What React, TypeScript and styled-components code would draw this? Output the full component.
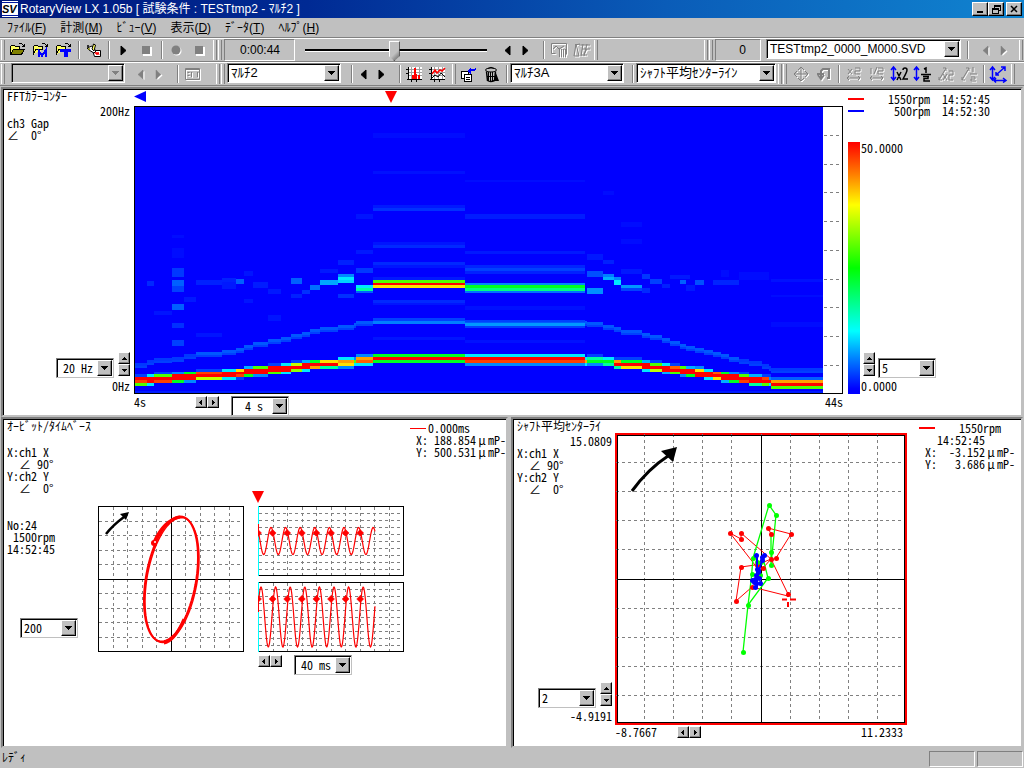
import React from "react";
import styled, { createGlobalStyle, css } from "styled-components";

const Global = createGlobalStyle`
  *, *::before, *::after { box-sizing: border-box; }
  body { margin: 0; background: #c0c0c0; }
  button, select, input { font: inherit; color: inherit; font-feature-settings: inherit; margin: 0; }
`;

const raised = css`
  border: 1px solid;
  border-color: #fff #000 #000 #fff;
  box-shadow: inset -1px -1px 0 #808080;
  background: #c0c0c0;
`;

const Window = styled.div`
  min-height: 100vh;
  display: flex;
  flex-direction: column;
  background: #c0c0c0;
  color: #000;
  font-family: "Liberation Sans", "Noto Sans CJK JP", sans-serif;
  font-size: 13px;
  line-height: 18px;
  font-feature-settings: "hwid";
`;

/* ---------- title bar and menu ---------- */

const TitleBar = styled.header`
  display: flex;
  align-items: center;
  height: 18px;
  padding: 0 2px;
  background: linear-gradient(90deg, #00187c 0%, #002a94 30%, #0a5cb8 65%, #1084d0 100%);
  color: #fff;
`;
const TitleText = styled.h1`
  flex: 1;
  margin: 0 0 0 2px;
  font-size: 12px;
  font-weight: 400;
  line-height: 18px;
  white-space: pre;
`;
const CaptionButton = styled.button<{ $apart?: boolean }>`
  ${raised}
  width: 16px;
  height: 14px;
  padding: 0;
  margin-left: ${(p) => (p.$apart ? 2 : 0)}px;
  display: grid;
  place-items: center;
`;
const MenuBar = styled.nav`
  display: flex;
  height: 20px;
  border-bottom: 1px solid #808080;
`;
const MenuItem = styled.button`
  border: 0;
  background: none;
  padding: 0 7px;
  line-height: 18px;
  font-size: 12px;
  white-space: nowrap;
`;

/* ---------- toolbars ---------- */

const ToolRow = styled.div`
  display: flex;
  height: 24px;
  border-top: 1px solid #fff;
  border-bottom: 1px solid #808080;
`;
const Grip = styled.span<{ $double?: boolean }>`
  flex: none;
  width: ${(p) => (p.$double ? 9 : 4)}px;
  margin: 1px ${(p) => (p.$double ? 2 : 1)}px;
  border-left: 1px solid #fff;
  border-right: 1px solid #808080;
  ${(p) =>
    p.$double &&
    css`
      background: linear-gradient(#808080, #808080) 2px 0 / 1px 100% no-repeat,
        linear-gradient(#fff, #fff) 4px 0 / 1px 100% no-repeat;
    `}
`;
const Divider = styled.span`
  flex: none;
  width: 2px;
  margin: 2px 2px 2px 3px;
  border-left: 1px solid #808080;
  border-right: 1px solid #fff;
`;
const ToolButton = styled.button<{ $narrow?: boolean }>`
  flex: none;
  width: ${(p) => (p.$narrow ? 18 : 23)}px;
  border: 0;
  padding: 0;
  background: none;
  display: grid;
  place-items: center;
`;
const Readout = styled.output<{ $wide?: boolean }>`
  flex: none;
  width: ${(p) => (p.$wide ? 71 : 46)}px;
  padding: 0 14px;
  line-height: 20px;
  font-size: 12px;
  text-align: right;
  border: 1px solid;
  border-color: #808080 #fff #fff #808080;
`;
const Filler = styled.span`
  flex: 1;
`;
const Slider = styled.input`
  appearance: none;
  width: 182px;
  height: 22px;
  && {
    margin: 1px 12px 0 10px;
  }
  background: linear-gradient(#000, #000) 0 9px / 100% 2px no-repeat,
    linear-gradient(#fff, #fff) 0 11px / 100% 1px no-repeat;
  &::-webkit-slider-thumb {
    appearance: none;
    width: 11px;
    height: 20px;
    border: 1px solid;
    border-color: #fff #404040 #404040 #fff;
    background: linear-gradient(135deg, #c0c0c0 60%, #606060 100%);
    clip-path: polygon(0 0, 100% 0, 100% 75%, 50% 100%, 0 75%);
  }
`;

const ComboBox = styled.label<{ $w: number; $big?: boolean; $off?: boolean; $pad?: number; $mono?: boolean }>`
  position: relative;
  display: block;
  flex: none;
  width: ${(p) => p.$w}px;
  height: 20px;
  border: 1px solid;
  border-color: ${(p) => (p.$mono ? "#808080 #c0c0c0 #c0c0c0 #808080" : "#808080 #fff #fff #808080")};
  box-shadow: inset 1px 1px 0 #000;
  background: ${(p) => (p.$off ? "#c0c0c0" : "#fff")};
  select {
    appearance: none;
    width: 100%;
    height: 18px;
    border: 0;
    outline: 0;
    padding: 0 17px 0 ${(p) => p.$pad ?? 3}px;
    background: none;
    line-height: 18px;
    font-size: ${(p) => (p.$big ? 13 : 12)}px;
    text-overflow: clip;
  }
  &::after {
    content: "";
    position: absolute;
    right: 1px;
    top: 1px;
    width: 15px;
    height: 16px;
    border: 1px solid;
    border-color: #fff #000 #000 #fff;
    box-shadow: inset -1px -1px 0 #808080;
    --ink: ${(p) => (p.$off ? "#808080, #808080" : "#000, #000")};
    background: linear-gradient(var(--ink)) 3px 5px / 7px 1px no-repeat,
      linear-gradient(var(--ink)) 4px 6px / 5px 1px no-repeat,
      linear-gradient(var(--ink)) 5px 7px / 3px 1px no-repeat,
      linear-gradient(var(--ink)) 6px 8px / 1px 1px no-repeat,
      #c0c0c0;
    pointer-events: none;
  }
`;

function Combo(props: { label: string; value: string; w: number; big?: boolean; off?: boolean; pad?: number; mono?: boolean }) {
  return (
    <ComboBox $w={props.w} $big={props.big} $off={props.off} $pad={props.pad} $mono={props.mono}>
      <select aria-label={props.label} disabled={props.off} defaultValue={props.value}>
        <option>{props.value}</option>
      </select>
    </ComboBox>
  );
}

/* ---------- icons ---------- */

const Svg = styled.svg`
  display: block;
  flex: none;
`;
const arrows = { left: "M6 0v9L1 4.5Z", right: "M1 0v9l5-4.5Z" };

function Arrow({ dir, off }: { dir: "left" | "right"; off?: boolean }) {
  return (
    <Svg width="10" height="11" viewBox="-1 -1 10 11">
      {off && <path d={arrows[dir]} fill="#fff" transform="translate(1.5 1)" />}
      <path d={arrows[dir]} fill={off ? "#808080" : "#000"} stroke={off ? "#808080" : "#000"} strokeWidth={off ? 0.5 : 1} />
    </Svg>
  );
}
function StopIcon() {
  return (
    <Svg width="11" height="11">
      <path d="M2 2h9v9H2Z" fill="#fff" />
      <path d="M1 1h8v8H1Z" fill="#808080" />
    </Svg>
  );
}
function RecordIcon() {
  return (
    <Svg width="11" height="11">
      <circle cx="6" cy="6" r="4.5" fill="#fff" />
      <circle cx="5" cy="5" r="4.5" fill="#808080" />
    </Svg>
  );
}
function FolderIcon({ tag }: { tag?: "m" | "t" }) {
  return (
    <Svg width="17" height="17" viewBox="0 0 17 17" shapeRendering="crispEdges">
      <path d="M1.5 12.500V4.500l1-1h3l1 1h4v2.500" fill="#ffff60" stroke="#000" />
      {!tag && <path d="M1.500 12.500l3-5h11l-3 5Z" fill="#808000" stroke="#000" />}
      {tag && <path d="M1.500 12.500l2-5h7" fill="#ffff60" stroke="#000" />}
      <path d="M9.500 2.500q2-2 4 0l1 1.500M15.500 1.500v3h-3" fill="none" stroke="#000" />
      {tag === "m" && <path d="M6.500 15V8.500l3.500 5 3.500-5V15" fill="none" stroke="#00f" strokeWidth="2" />}
      {tag === "t" && <path d="M5 7h11v3H5ZM9 10h4v5H9Z" fill="#00f" />}
    </Svg>
  );
}
function PenIcon() {
  return (
    <Svg width="17" height="17" viewBox="0 0 17 17">
      <path d="M7.500 8.500h8v6h-6Z" fill="#fff" stroke="#000" />
      <path d="M2 6l5-2 4 5-2 2-5-3Z" fill="#fff" stroke="#000" />
      <path d="M7 7l1.500-5 2 1-1.500 6Z" fill="#ffff60" stroke="#000" />
      <path d="M10 12l1-2 1 3 1-3 1 3" fill="none" stroke="#f00" />
      <circle cx="3" cy="4" r="1" /><circle cx="4" cy="7" r="1" fill="#808000" />
    </Svg>
  );
}
function GridIcon({ kind }: { kind: "spectrum" | "trend" }) {
  return (
    <Svg width="17" height="17" viewBox="0 0 17 17" shapeRendering="crispEdges">
      <path d="M2 1h14v12H2Z" fill="#fff" />
      <path d="M5.500 1v12M9.500 1v12M13.500 1v12M2 3.500h14M2 6.500h14M2 9.500h14" stroke="#a0a0a0" />
      <path d="M2.500 1v13M1 13.500h15M0 3.500h2M0 7.500h2M5.500 14v2M10.500 14v2" stroke="#000" fill="none" />
      {kind === "spectrum" ? (
        <path d="M8 2h2v6h1v5H6V9h2ZM12 9h2v4h-2Z" fill="#f00" />
      ) : (
        <g fill="none" shapeRendering="auto">
          <path d="M3 12l3-3 3 2 3-4 4 4" stroke="#000" />
          <path d="M3 8l3-4 2 3 3-3 2 1 3-3" stroke="#f00" strokeWidth="1.500" />
        </g>
      )}
    </Svg>
  );
}
function CopyIcon() {
  return (
    <Svg width="17" height="17" viewBox="0 0 17 17" shapeRendering="crispEdges">
      <path d="M1.500 5.500h7v7h-7Z" fill="#fff" stroke="#000" />
      <path d="M4.500 8.500h7v7h-7ZM6 11.500h4M6 13.500h4" fill="#fff" stroke="#000" />
      <path d="M7 5l4-4v2h3l2-1v2l-2 1h-3v4Z" fill="#00f" />
    </Svg>
  );
}
function TrashIcon() {
  return (
    <Svg width="17" height="17" viewBox="0 0 17 17">
      <path d="M10 7h3l3 8H8Z" fill="#000" />
      <path d="M3.500 5.500l1 9q3 2 7 0l1-9" fill="#c0c0c0" stroke="#000" strokeWidth="1.500" />
      <path d="M5.500 6v9M7.500 6v9M9.500 6v9M4 10.500h8" stroke="#000" />
      <ellipse cx="8" cy="4" rx="5.500" ry="2" fill="#c0c0c0" stroke="#000" />
      <path d="M5 2.500q3-2.500 6 0" fill="none" stroke="#000" />
    </Svg>
  );
}
function Etched({ d, w = 2 }: { d: string; w?: number }) {
  return (
    <Svg width="18" height="18" viewBox="0 0 18 18" fill="none" strokeWidth={w}>
      <path d={d} stroke="#fff" transform="translate(1 1)" />
      <path d={d} stroke="#808080" />
    </Svg>
  );
}
const shapes = {
  window: "M1.500 3.500h14v11h-14ZM2 4.500h13M3.500 7.500h2M3.500 10.500h2M7.500 7v5M13.500 7v5",
  timeHold: "M1.500 2.500h15v11M1.500 2.500v10h4M3 8l3-3 3 3 5-3M9.500 8v8M11.500 8v8M13.500 8v8M15.500 8v8",
  waves: "M1 15l2-12 3 12M1 15h5M2 4l5-1M8 15l2-12M11 15l3-12M6 4h11M9 8h8M8 14h6M14 8l-3 5",
  move: "M9 2v14M2 9h14M6 5l3-3 3 3M6 13l3 3 3-3M5 6L2 9l3 3M13 6l3 3-3 3",
  turn: "M2 9h7M3 10l3 4 3-4M6 13V6l2-2h6v9h-2",
  times2: "M3 4l4 5M7 4l-4 5M10 3h5v3h-5v3h5M2 13h13M4 11l-2 2 2 2M13 11l2 2-2 2",
  half: "M3 3v6M9 2L6 9M10 3h5v3h-5v3h5M2 13h13M4 11l-2 2 2 2M13 11l2 2-2 2",
  diag2: "M2 15L9 3M6 3h3v3M2 12v3h3M6 9l4 6M10 9l-4 6M12 6h4v4h-4v5h4",
  diagHalf: "M2 15L9 3M6 3h3v3M2 12v3h3M13 2v5M10 9h7M11 12h4v2h-4v2h5",
};
function ScaleIcon({ kind }: { kind: "x2" | "half" | "both" }) {
  return (
    <Svg width="19" height="18" viewBox="0 0 19 18" fill="none" strokeWidth="1.500">
      <path d="M3.500 2v13M1 5l2.500-3L6 5M1 12l2.500 3L6 12" stroke="#00f" />
      {kind === "x2" && <path d="M7 7l4 8M11 7l-4 8M13 5q0-2 2-2t2 2-4 9h5" stroke="#000" />}
      {kind === "half" && <path d="M11 4l2-1v5M8 9.500h10M10 11.500h6M15 11.500v2h-4v2.500h6" stroke="#000" />}
      {kind === "both" && (
        <path d="M7 10L16 2M12 2h4v4M7 7v3h3M5 15.500h12M14 13l3 2.500-3 2M7 13l-2 2.500 2 2" stroke="#00f" />
      )}
    </Svg>
  );
}

/* ---------- document area ---------- */

const Workspace = styled.main`
  flex: 1;
  display: grid;
  grid-template-columns: 508fr 513fr;
  grid-template-rows: 330fr 331fr;
  column-gap: 2px;
  margin-right: 1px;
  padding-top: 1px;
  background: #c0c0c0;
`;
const Panel = styled.section<{ $wide?: boolean }>`
  min-width: 0;
  background: #fff;
  border: 2px solid;
  border-color: #808080 #c0c0c0 #c0c0c0 #808080;
  box-shadow: inset 1px 1px 0 #000;
  margin-left: 1px;
  padding: 1px 0 0 1px;
  font-family: "Noto Sans CJK JP", sans-serif;
  font-size: 12px;
  line-height: 12px;
  ${(p) => p.$wide && css`grid-column: 1 / -1;`}
`;
const Line = styled.div<{ $end?: boolean; $gap?: number }>`
  height: 12px;
  white-space: pre;
  margin-top: ${(p) => p.$gap ?? 0}px;
  text-align: ${(p) => (p.$end ? "right" : "left")};
`;
const WideSign = styled.span`
  display: inline-block;
  width: 12px;
  text-align: center;
`;
const Spinner = styled.span<{ $row?: boolean }>`
  flex: none;
  display: inline-flex;
  flex-direction: ${(p) => (p.$row ? "row" : "column")};
  align-self: ${(p) => (p.$row ? "flex-start" : "flex-end")};
  margin-bottom: ${(p) => (p.$row ? 0 : 2)}px;
  button {
    ${raised}
    width: 12px;
    height: 12px;
    padding: 0;
    display: grid;
    place-items: center;
  }
`;
const tips = {
  up: "M3 1h1v1h1v1h1v1H1V3h1V2h1Z",
  down: "M1 1h5v1H5v1H4v1H3V3H2V2H1Z",
  left: "M4 0v5H3V4H2V3H1V2h1V1h1V0Z",
  right: "M2 0v5h1V4h1V3h1V2H4V1H3V0Z",
};
function Spin({ row, label }: { row?: boolean; label: string }) {
  const pair: (keyof typeof tips)[] = row ? ["left", "right"] : ["up", "down"];
  return (
    <Spinner $row={row}>
      {pair.map((k) => (
        <button key={k} aria-label={`${label} ${k}`}>
          <Svg width="7" height="5" shapeRendering="crispEdges"><path d={tips[k]} /></Svg>
        </button>
      ))}
    </Spinner>
  );
}

const Contour = styled.div`
  display: grid;
  grid-template-columns: 130px 1fr 178px;
  height: 100%;
`;
const Side = styled.div`
  display: flex;
  flex-direction: column;
  padding: 0 4px 23px 3px;
`;
const Controls = styled.div<{ $end?: boolean; $gap?: number; $inset?: number }>`
  display: flex;
  align-items: flex-end;
  justify-content: ${(p) => (p.$end ? "flex-end" : "flex-start")};
  gap: ${(p) => p.$gap ?? 4}px;
  padding-left: ${(p) => p.$inset ?? 0}px;
`;
const Stretch = styled.div`
  flex: 1;
`;
const ChartColumn = styled.div`
  display: flex;
  flex-direction: column;
  min-width: 0;
`;
const MarkerRow = styled.div`
  position: relative;
  height: 16px;
`;
const CursorMark = styled(Svg)`
  position: absolute;
  left: 36%;
  top: 1px;
  margin-left: -4px;
`;
const ContourPlot = styled.svg`
  display: block;
  flex: 1;
  width: 100%;
  height: 288px;
  min-height: 288px;
  border: 1px solid #000;
`;
const AxisRow = styled.div<{ $tight?: boolean }>`
  display: flex;
  height: ${(p) => (p.$tight ? 14 : 21)}px;
  padding-top: ${(p) => (p.$tight ? 1 : 2)}px;
  padding-right: ${(p) => (p.$tight ? 4 : 0)}px;
`;
const AxisText = styled.span`
  white-space: pre;
  line-height: 12px;
`;
const Space = styled.span<{ $w: number }>`
  flex: none;
  width: ${(p) => p.$w}px;
`;
const Scale = styled.div`
  display: flex;
  flex-direction: column;
  padding: 3px 0 21px 5px;
`;
const LegendRow = styled.div`
  display: flex;
  align-items: center;
  height: 12px;
  white-space: pre;
`;
const Swatch = styled.i<{ $c: string; $thin?: boolean }>`
  width: 16px;
  height: ${(p) => (p.$thin ? 1 : 2)}px;
  background: ${(p) => p.$c};
`;
const ScaleBody = styled.div`
  flex: 1;
  display: flex;
  margin-top: 25px;
`;
const ColourBar = styled.div`
  width: 12px;
  background: linear-gradient(#f00 0, #ff8000 13%, #ff0 25%, #0f0 50%, #0ff 75%, #0080ff 86%, #00f 98%);
`;
const ScaleMarks = styled.div`
  flex: 1;
  display: flex;
  flex-direction: column;
  padding: 0 0 2px 1px;
`;

/* Ridge rows are numbered upward from the bottom of the spectrum; each is about 2.87 units tall. */
const R = "#ff0000", O = "#ff4000", A = "#ffa000", Y = "#ffe000", L = "#c0ff00", G = "#50ff00", N = "#00ff20", T = "#00ffa0", C = "#00e8ff", S = "#00b0ff", B = "#0088ff", D = "#0040ff";
const rowY = (k: number) => 276 - Math.round(2.87 * k);
type Col = [number, number, number, string[], number];
/* start, end, lowest row, colours upward, y of the second harmonic */
const cols: Col[] = [
  [0, 12, 0, [G, O, R, D], 259], [12, 19, 0, [C, R, R, C], 256], [19, 37, 1, [O, R, G, D], 254],
  [37, 49, 1, [N, R, R, B], 253], [49, 61, 1, [B, R, R, N], 250], [61, 87, 2, [L, R, O, D], 248],
  [87, 101, 2, [C, R, R, C], 246], [101, 109, 2, [D, O, R, Y], 244], [109, 118, 3, [N, R, R, S], 241],
  [118, 133, 3, [B, R, R, G], 238], [133, 146, 4, [G, R, R, D], 235], [146, 156, 4, [C, R, R, C], 233],
  [156, 167, 5, ["#90ff00", R, L, D], 230], [167, 175, 5, [C, R, R, S], 228], [175, 185, 6, [A, R, N], 225],
  [185, 203, 6, [T, R, Y], 223], [203, 219, 6, [B, Y, A, C], 221], [219, 221, 7, [C, G, B], 219],
  [221, 238, 7, [C, "#ff6000", A, B], 217], [238, 330, 8, [N, R, N], 214], [330, 450, 7, [B, O, R, C], 217],
  [450, 452, 7, [C, A, C], 217], [452, 468, 7, [B, N, T, D], 218], [468, 479, 7, [T, N, C], 221],
  [479, 486, 6, [T, R, A, D], 223], [486, 507, 6, [Y, R, N, D], 226], [507, 515, 5, [C, R, R, S], 229],
  [515, 527, 5, [L, R, G, D], 231], [527, 535, 4, [S, R, R, C], 234], [535, 545, 4, [G, R, "#ff6000", D], 237],
  [545, 551, 3, [B, R, R, G], 240], [551, 560, 3, [N, R, R, S], 242], [560, 569, 3, [R, R, Y, B], 244],
  [569, 578, 2, [C, R, R, C], 246], [578, 586, 2, [Y, R, "#ff6000"], 248], [586, 594, 1, [S, R, R, N], 250],
  [594, 604, 1, [N, R, R, B], 253], [604, 614, 1, [O, R, G, D], 255], [614, 627, 0, [T, R, R, S], 257],
  [627, 634, 0, [G, R, O, D], 260], [634, 636, 0, [C, R, B, D], 262], [636, 688, -1, [G, R, A, "#0060ff"], 264],
];
/* x, y, width, height, colour of the remaining lines */
const lines: [number, number, number, number, string][] = [
  [238, 173, 92, 3, G], [238, 176, 92, 2, R], [238, 178, 92, 3, Y], [238, 211, 92, 3, D], [238, 214, 92, 3, "#0080ff"],
  [330, 176, 120, 2, B], [330, 178, 120, 3, N], [330, 181, 120, 3, "#00ff80"], [330, 184, 120, 2, "#0070ff"],
  [330, 213, 120, 2, D], [330, 216, 120, 3, "#0098ff"], [330, 219, 120, 2, D],
  [238, 26, 92, 5, "#000cff"], [238, 64, 92, 3, "#0010ff"], [238, 98, 92, 3, "#0018ff"], [238, 101, 92, 3, "#0030ff"],
  [238, 135, 92, 3, "#0014ff"], [238, 138, 92, 3, "#0028ff"], [238, 155, 92, 3, "#0028ff"], [238, 158, 92, 3, "#0014ff"],
  [238, 170, 92, 3, "#0018ff"], [238, 193, 92, 3, "#0028ff"], [238, 196, 92, 2, "#0014ff"], [238, 230, 92, 3, "#0014ff"],
  [330, 73, 120, 2, "#000cff"], [330, 107, 120, 5, "#001cff"], [330, 144, 120, 3, "#0018ff"],
  [330, 158, 120, 3, "#0024ff"], [330, 161, 120, 3, "#0040ff"], [330, 164, 120, 3, "#0020ff"],
  [330, 199, 120, 4, "#0010ff"], [330, 233, 120, 3, "#0010ff"],
  [221, 161, 17, 5, "#0038ff"], [221, 178, 17, 3, C], [221, 181, 17, 3, T], [221, 184, 17, 2, "#0060ff"],
  [221, 107, 17, 5, "#0014ff"], [221, 143, 17, 4, "#0018ff"],
  [203, 153, 16, 5, "#0020ff"], [203, 167, 16, 3, B], [203, 170, 16, 3, C], [203, 173, 16, 3, "#00d0ff"], [203, 187, 16, 4, "#0030ff"],
  [185, 173, 18, 5, "#00a8ff"], [185, 162, 18, 4, "#0018ff"], [175, 178, 10, 5, "#0070ff"], [156, 171, 11, 6, "#0060ff"],
  [167, 183, 8, 4, "#0030ff"], [156, 187, 11, 4, "#0020ff"], [133, 182, 13, 5, "#0018ff"],
  [37, 161, 12, 9, "#0038ff"], [37, 173, 12, 6, "#0060ff"], [37, 179, 12, 6, "#0040ff"], [37, 197, 12, 6, "#0060ff"],
  [37, 216, 12, 5, "#0030ff"], [37, 233, 12, 6, "#0040ff"], [37, 128, 12, 3, "#000cff"], [37, 141, 12, 10, "#000cff"],
  [12, 174, 7, 5, "#0028ff"], [61, 173, 26, 5, "#0020ff"], [87, 171, 14, 4, "#0020ff"], [87, 175, 14, 7, "#0018ff"],
  [101, 172, 8, 5, "#0060ff"], [109, 164, 9, 5, "#0014ff"], [118, 175, 15, 6, "#001cff"], [49, 190, 12, 5, "#0018ff"],
  [19, 204, 18, 4, "#0014ff"], [61, 226, 26, 4, "#0014ff"], [133, 208, 13, 6, "#0014ff"], [109, 192, 9, 4, "#0014ff"],
  [452, 147, 16, 6, "#0018ff"], [452, 164, 16, 6, "#0050ff"], [452, 181, 16, 6, "#0090ff"], [468, 153, 11, 4, "#0020ff"],
  [468, 167, 11, 3, "#0080ff"], [468, 170, 11, 3, S], [479, 170, 7, 3, B], [479, 173, 7, 5, C],
  [486, 162, 21, 5, "#0018ff"], [486, 178, 21, 3, "#0098ff"], [486, 181, 21, 3, D], [507, 167, 8, 5, "#0038ff"],
  [507, 181, 8, 5, "#0028ff"], [515, 172, 12, 5, "#0040ff"], [535, 168, 20, 4, "#0018ff"], [527, 177, 8, 4, "#0020ff"],
  [545, 173, 6, 4, "#0060ff"], [551, 178, 9, 6, "#0018ff"], [560, 173, 9, 5, "#0050ff"], [578, 173, 26, 5, "#0024ff"],
  [586, 163, 8, 7, "#000cff"], [604, 165, 30, 8, "#000cff"], [636, 172, 52, 3, "#0010ff"], [636, 188, 52, 2, "#000cff"],
  [636, 215, 52, 5, "#000cff"], [0, 284, 688, 2, "#001cff"],
  [468, 84, 11, 4, "#000cff"], [486, 115, 21, 5, "#000cff"], [486, 132, 21, 5, "#000cff"],
];

function SpectrumMap() {
  return (
    <ContourPlot viewBox="0 0 707 286" preserveAspectRatio="none" shapeRendering="crispEdges" role="img" aria-label="FFT color contour">
      <rect width="707" height="286" fill="#fff" />
      <rect width="688" height="286" fill="#00f" />
      {cols.map(([a, b, k, c, h], i) => (
        <g key={i}>
          <rect x={a} y={h - 3} width={b - a} height="3" fill={a < 60 || a > 600 ? "#0038ff" : "#0058ff"} />
          <rect x={a} y={h} width={b - a} height="2" fill="#0040ff" />
          {c.map((fill, j) => (
            <rect key={j} x={a} y={rowY(k + j)} width={b - a} height={rowY(k + j - 1) - rowY(k + j)} fill={fill} />
          ))}
        </g>
      ))}
      {lines.map(([x, y, w, h, fill], i) => (
        <rect key={i} x={x} y={y} width={w} height={h} fill={fill} />
      ))}
      {Array.from({ length: 9 }, (_, i) => (
        <path key={i} d={`M689 ${28.5 + Math.round(i * 28.7)}h16`} stroke="#808080" strokeDasharray="3 3" />
      ))}
    </ContourPlot>
  );
}

/* ---------- orbit / time base ---------- */

const PanelHead = styled.div`
  display: flex;
  justify-content: space-between;
  height: 71px;
`;
const HeadText = styled.div<{ $legend?: boolean }>`
  padding: ${(p) => (p.$legend ? "2px 0 0 0" : "0 0 0 3px")};
`;
const OrbitBody = styled.div`
  display: flex;
  align-items: flex-start;
`;
const OrbitSide = styled.div`
  width: 94px;
  padding: 28px 20px 0 3px;
  white-space: pre;
`;
const Inset = styled.div`
  padding: 63px 0 0 13px;
`;
const OrbitPlot = styled.svg`
  display: block;
  flex: none;
  margin: 15px 14px 0 0;
`;
const TimeColumn = styled.div`
  flex: none;
  width: 147px;
`;
const TimePlot = styled.svg`
  display: block;
  & + & {
    margin-top: 6px;
    margin-bottom: 3px;
  }
`;
const TimeMark = styled(Svg)`
  margin: 0 0 3px -6px;
`;

const ellipse = (dx = 0, dy = 0) =>
  Array.from({ length: 73 }, (_, i) => {
    const t = (i * Math.PI) / 36;
    return `${i ? "L" : "M"}${(73 + dx + 27 * Math.cos(t)).toFixed(1)} ${(73 + dy - 62.5 * Math.cos(t - 1.22)).toFixed(1)}`;
  }).join("");

function gridPath(n: number, step: number, size: number, m: number, stepY: number, sizeY: number) {
  let d = "";
  for (let i = 1; i < n; i++) d += `M${Math.round(i * step) + 0.5} 1V${sizeY}`;
  for (let i = 1; i < m; i++) d += `M1 ${Math.round(i * stepY) + 0.5}H${size}`;
  return d;
}

function Orbit() {
  return (
    <OrbitPlot width="146" height="146" role="img" aria-label="Orbit">
      <g shapeRendering="crispEdges" fill="none">
        <path d={gridPath(10, 14.5, 145, 10, 14.5, 145)} stroke="#808080" strokeDasharray="3 3" />
        <path d="M.5 .5h145v145H.5ZM73.500 0v146M0 73.500h146" stroke="#000" />
      </g>
      <g fill="none" stroke="#f00">
        <path d={ellipse()} strokeWidth="2" />
        <path d={ellipse(1, 1)} strokeWidth="1.500" />
        <path d="M56 36Q66 14 82 11M66 137Q76 136 86 113" strokeWidth="3" />
      </g>
      <circle cx="56" cy="37" r="3" fill="#f00" />
      <circle cx="57" cy="36" r="1" fill="#fff" />
      <path d="M8 28Q15 19 26 11" fill="none" stroke="#000" strokeWidth="2.500" />
      <path d="M31 6l-9 2 6 6Z" />
    </OrbitPlot>
  );
}

function Wave({ amp, phase, dotY }: { amp: number; phase: number; dotY: number }) {
  const d = Array.from({ length: 233 }, (_, i) => {
    const x = i / 2;
    const y = 35 - amp * Math.cos(((x - phase) * 2 * Math.PI) / 14.6);
    return `${i ? "L" : "M"}${x + 1} ${y.toFixed(1)}`;
  }).join("");
  return (
    <TimePlot width="146" height="70" role="img" aria-label="Time base">
      <g shapeRendering="crispEdges" fill="none">
        <path d={gridPath(10, 14.5, 145, 10, 7, 69)} stroke="#808080" strokeDasharray="3 3" />
        <path d="M.5 .5h145v69H.5Z" stroke="#000" />
        <path d="M.5 0v70" stroke="#0ff" />
        <path d="M.5 18v12" stroke="#f00" />
      </g>
      <path d={d} fill="none" stroke="#f00" strokeWidth="1.200" />
      {Array.from({ length: 8 }, (_, i) => (
        <path key={i} d={`M${i * 14.6 - 3.5} ${dotY}l3.500-3.500 3.500 3.500-3.500 3.500Z`} fill="#f00" stroke="#f00" strokeWidth=".5" />
      ))}
    </TimePlot>
  );
}

/* ---------- shaft centre line ---------- */

const ShaftBody = styled.div`
  display: flex;
  justify-content: space-between;
`;
const ShaftSide = styled.div`
  flex: none;
  width: 101px;
  display: flex;
  flex-direction: column;
  padding: 0 3px 17px 3px;
`;
const ShaftMain = styled.div`
  flex: none;
  width: 292px;
  padding-top: 13px;
`;
const ShaftLegend = styled.div`
  flex: 1;
  padding: 2px 0 0 12px;
`;

const dots = (pts: [number, number][], fill: string, r = 2) =>
  pts.map(([x, y], i) => <circle key={i} cx={x + 0.5} cy={y + 0.5} r={r} fill={fill} />);

function ShaftPlot() {
  return (
    <Svg width="292" height="292" role="img" aria-label="Shaft average centerline">
      <g shapeRendering="crispEdges" fill="none">
        <path d="M1 1h290v290H1Z" stroke="#f00" strokeWidth="2" />
        <path d={gridPath(10, 29.1, 289, 10, 29.1, 289)} stroke="#808080" strokeDasharray="3 3" />
        <path d="M2.500 2.500h287v287h-287ZM146.500 3v286M3 146.500h286" stroke="#000" />
      </g>
      <path d="M17 58Q33 36 53 23" fill="none" stroke="#000" strokeWidth="3" />
      <path d="M62 14l-16 4 12 11Z" />
      <path d="M156 126L126 100v6L115 100l25 32-14 2-5 34 16-14 36 9M142 132l14-6 17 35M156 126l-8 9M153 95l23 6-15 24M153 95l3 6" fill="none" stroke="#f00" />
      <path d="M138 125l16-53 7 10-5 50v-31M138 125l-2 24M148 125l5 20-20 27-5 47M137 140l-4 32" fill="none" stroke="#0f0" strokeWidth="1.300" />
      {dots([[126, 106], [126, 100], [161, 125], [176, 101], [153, 95], [156, 101]], "#f00", 2.5)}
      {dots([[115, 100], [126, 134], [121, 168], [137, 154], [148, 135], [142, 132], [173, 161], [156, 126]], "#f00", 2.5)}
      {dots([[154, 72], [161, 82], [156, 119], [156, 132], [153, 145], [133, 172], [128, 219], [138, 125], [142, 129], [146, 129], [137, 141], [145, 142]], "#0f0", 2.5)}
      {dots([[141, 122], [147, 124], [149, 122], [147, 127], [142, 136], [143, 139], [141, 142], [140, 146], [137, 147], [144, 145], [143, 137], [141, 150], [145, 150], [140, 154], [139, 149]], "#00f", 2.5)}
      <path d="M142 124v30M148 124l-7 24" stroke="#00f" fill="none" strokeWidth="2" />
      <path d="M167 166.500h5M175 166.500h6M173 159v5M173 169v5" stroke="#f00" strokeWidth="2" />
    </Svg>
  );
}

const StatusBar = styled.footer`
  display: flex;
  height: 20px;
  padding-left: 2px;
  font-size: 12px;
  line-height: 21px;
`;
const StatusCell = styled.span`
  width: 46px;
  margin: 3px 1px 1px;
  border: 1px solid;
  border-color: #808080 #fff #fff #808080;
`;

const menus: [string, string][] = [["ﾌｧｲﾙ", "F"], ["計測", "M"], ["ﾋﾞｭｰ", "V"], ["表示", "D"], ["ﾃﾞｰﾀ", "T"], ["ﾍﾙﾌﾟ", "H"]];

const channels = ["X:ch1 X", "  ∠ 90°", "Y:ch2 Y", "  ∠  0°"];

function Amplitude({ text }: { text: string }) {
  return <Line>{text}<WideSign>μ</WideSign>mP-</Line>;
}

export default function App() {
  return (
    <Window>
      <Global />
      <TitleBar>
        <Svg width="16" height="16">
          <rect width="16" height="16" fill="#fff" />
          <path d="M0 1.500h16M0 14.500h16" stroke="#0018a0" />
          <text x="0" y="12" fontSize="11" fontWeight="700" fontStyle="italic" fontFamily="Liberation Sans" fill="#000">SV</text>
        </Svg>
        <TitleText>RotaryView LX 1.05b [ 試験条件 : TESTtmp2 - ﾏﾙﾁ2 ]</TitleText>
        <CaptionButton aria-label="Minimize"><Svg width="8" height="8"><path d="M1 6h6v2H1Z" /></Svg></CaptionButton>
        <CaptionButton aria-label="Restore">
          <Svg width="9" height="9" fill="none" stroke="#000" shapeRendering="crispEdges"><path d="M2.500 3V.5h6v5H7M2 1.500h6M.5 3.500h6v5h-6ZM0 4.500h6" /></Svg>
        </CaptionButton>
        <CaptionButton aria-label="Close" $apart><Svg width="8" height="8"><path d="M1 1l6 6M7 1L1 7" stroke="#000" strokeWidth="1.500" /></Svg></CaptionButton>
      </TitleBar>
      <MenuBar>
        {menus.map(([name, key]) => (
          <MenuItem key={key}>{name}(<u>{key}</u>)</MenuItem>
        ))}
      </MenuBar>

      <ToolRow>
        <Grip />
        <ToolButton aria-label="Open"><FolderIcon /></ToolButton>
        <ToolButton aria-label="Open multi"><FolderIcon tag="m" /></ToolButton>
        <ToolButton aria-label="Open trend"><FolderIcon tag="t" /></ToolButton>
        <Divider />
        <ToolButton aria-label="Edit conditions"><PenIcon /></ToolButton>
        <Divider />
        <ToolButton aria-label="Play"><Arrow dir="right" /></ToolButton>
        <ToolButton aria-label="Stop" disabled><StopIcon /></ToolButton>
        <Divider />
        <ToolButton aria-label="Record" disabled><RecordIcon /></ToolButton>
        <ToolButton aria-label="Stop recording" disabled><StopIcon /></ToolButton>
        <Grip $double />
        <Readout $wide>0:00:44</Readout>
        <Slider type="range" aria-label="Position" min={0} max={100} defaultValue={49} />
        <ToolButton $narrow aria-label="Step back"><Arrow dir="left" /></ToolButton>
        <ToolButton $narrow aria-label="Step forward"><Arrow dir="right" /></ToolButton>
        <Space $w={5} />
        <Divider />
        <ToolButton aria-label="Hold" disabled><Etched d={shapes.timeHold} w={1} /></ToolButton>
        <ToolButton aria-label="Waterfall" disabled><Etched d={shapes.waves} w={1} /></ToolButton>
        <Grip />
        <Filler />
        <Grip $double />
        <Readout>0</Readout>
        <Space $w={5} />
        <Combo label="Data file" value="TESTtmp2_0000_M000.SVD" w={195} />
        <Space $w={3} />
        <Divider />
        <Space $w={6} />
        <ToolButton $narrow aria-label="Previous file" disabled><Arrow dir="left" off /></ToolButton>
        <ToolButton $narrow aria-label="Next file" disabled><Arrow dir="right" off /></ToolButton>
        <Space $w={5} />
        <Grip />
      </ToolRow>
      <ToolRow>
        <Grip />
        <Space $w={5} />
        <Combo label="Condition" value="" w={114} off />
        <Space $w={7} />
        <ToolButton $narrow aria-label="Previous condition" disabled><Arrow dir="left" off /></ToolButton>
        <ToolButton $narrow aria-label="Next condition" disabled><Arrow dir="right" off /></ToolButton>
        <Space $w={6} />
        <Divider />
        <ToolButton aria-label="Properties" disabled><Etched d={shapes.window} w={1} /></ToolButton>
        <Space $w={10} />
        <Grip $double />
        <Combo label="Layout" value="ﾏﾙﾁ2" w={114} big />
        <Space $w={7} />
        <Divider />
        <ToolButton $narrow aria-label="Previous layout"><Arrow dir="left" /></ToolButton>
        <ToolButton $narrow aria-label="Next layout"><Arrow dir="right" /></ToolButton>
        <Space $w={5} />
        <Divider />
        <ToolButton aria-label="Spectrum"><GridIcon kind="spectrum" /></ToolButton>
        <ToolButton aria-label="Trend"><GridIcon kind="trend" /></ToolButton>
        <Space $w={2} />
        <Grip />
        <ToolButton aria-label="Copy layout"><CopyIcon /></ToolButton>
        <ToolButton aria-label="Delete layout"><TrashIcon /></ToolButton>
        <Divider />
        <Combo label="Multi layout" value="ﾏﾙﾁ3A" w={114} big />
        <Space $w={5} />
        <Divider />
        <Combo label="Graph" value="ｼｬﾌﾄ平均ｾﾝﾀｰﾗｲﾝ" w={140} big />
        <Grip $double />
        <ToolButton aria-label="Move" disabled><Etched d={shapes.move} w={1} /></ToolButton>
        <ToolButton aria-label="Undo" disabled><Etched d={shapes.turn} /></ToolButton>
        <Divider />
        <ToolButton aria-label="Horizontal x2" disabled><Etched d={shapes.times2} w={1} /></ToolButton>
        <ToolButton aria-label="Horizontal half" disabled><Etched d={shapes.half} w={1} /></ToolButton>
        <ToolButton aria-label="Vertical x2"><ScaleIcon kind="x2" /></ToolButton>
        <ToolButton aria-label="Vertical half"><ScaleIcon kind="half" /></ToolButton>
        <ToolButton aria-label="Both x2" disabled><Etched d={shapes.diag2} w={1} /></ToolButton>
        <ToolButton aria-label="Both half" disabled><Etched d={shapes.diagHalf} w={1} /></ToolButton>
        <Divider />
        <ToolButton aria-label="Auto scale"><ScaleIcon kind="both" /></ToolButton>
        <Grip />
      </ToolRow>

      <Workspace>
        <Panel $wide>
          <Contour>
            <Side>
              <Line>FFTｶﾗｰｺﾝﾀｰ</Line>
              <Line $end $gap={3}>200Hz</Line>
              <Line>ch3 Gap</Line>
              <Line>{"∠  0°"}</Line>
              <Stretch />
              <Controls $end>
                <Combo label="Frequency step" value="20 Hz" w={58} pad={6} mono />
                <Spin label="Frequency" />
              </Controls>
              <Line $end $gap={2}>0Hz</Line>
            </Side>
            <ChartColumn>
              <MarkerRow>
                <Svg width="12" height="12"><path d="M12 1v11L0 6.500Z" fill="#00f" /></Svg>
                <CursorMark width="12" height="12"><path d="M0 0h12L6 12Z" fill="#f00" /></CursorMark>
              </MarkerRow>
              <SpectrumMap />
              <AxisRow>
                <AxisText>4s</AxisText>
                <Space $w={49} />
                <Spin row label="Time" />
                <Space $w={12} />
                <Combo label="Time step" value="4 s" w={58} pad={13} mono />
                <Filler />
                <AxisText>44s</AxisText>
              </AxisRow>
            </ChartColumn>
            <Scale>
              <LegendRow><Swatch $c="#f00" />{"    1550rpm  14:52:45"}</LegendRow>
              <LegendRow><Swatch $c="#00f" />{"     500rpm  14:52:30"}</LegendRow>
              <ScaleBody>
                <ColourBar />
                <ScaleMarks>
                  <Line>50.0000</Line>
                  <Stretch />
                  <Controls $gap={3} $inset={2}>
                    <Spin label="Amplitude" />
                    <Combo label="Amplitude step" value="5" w={58} mono />
                  </Controls>
                  <Line $gap={2}>0.0000</Line>
                </ScaleMarks>
              </ScaleBody>
            </Scale>
          </Contour>
        </Panel>

        <Panel>
          <PanelHead>
            <HeadText>
              <Line>ｵｰﾋﾞｯﾄ/ﾀｲﾑﾍﾞｰｽ</Line>
              <Line $gap={14}>{channels[0]}</Line>
              {channels.slice(1).map((c) => <Line key={c}>{c}</Line>)}
            </HeadText>
            <HeadText $legend>
              <LegendRow><Swatch $c="#f00" $thin /><Space $w={2} />0.000ms</LegendRow>
              <Amplitude text=" X: 188.854" />
              <Amplitude text=" Y: 500.531" />
            </HeadText>
          </PanelHead>
          <OrbitBody>
            <OrbitSide>
              <Line>No:24</Line>
              <Line>{" 1500rpm"}</Line>
              <Line>14:52:45</Line>
              <Inset><Combo label="Orbit scale" value="200" w={58} mono /></Inset>
            </OrbitSide>
            <Orbit />
            <TimeColumn>
              <TimeMark width="12" height="12"><path d="M0 0h12L6 12Z" fill="#f00" /></TimeMark>
              <Wave amp={13.5} phase={12} dotY={27} />
              <Wave amp={30} phase={2} dotY={17} />
              <Controls $gap={12}>
                <Spin row label="Time base" />
                <Combo label="Time base width" value="40 ms" w={58} pad={6} mono />
              </Controls>
            </TimeColumn>
          </OrbitBody>
        </Panel>

        <Panel>
          <ShaftBody>
            <ShaftSide>
              <Line>ｼｬﾌﾄ平均ｾﾝﾀｰﾗｲ</Line>
              <Line $end $gap={3}>15.0809</Line>
              {channels.map((c) => <Line key={c}>{c}</Line>)}
              <Stretch />
              <Controls $end>
                <Combo label="Shaft scale" value="2" w={58} mono />
                <Spin label="Vertical" />
              </Controls>
              <Line $end $gap={2}>-4.9191</Line>
            </ShaftSide>
            <ShaftMain>
              <ShaftPlot />
              <AxisRow $tight>
                <AxisText>-8.7667</AxisText>
                <Space $w={20} />
                <Spin row label="Horizontal" />
                <Filler />
                <AxisText>11.2333</AxisText>
              </AxisRow>
            </ShaftMain>
            <ShaftLegend>
              <LegendRow><Swatch $c="#f00" />{"    1550rpm"}</LegendRow>
              <Line>{"   14:52:45"}</Line>
              <Amplitude text=" X:  -3.152" />
              <Amplitude text=" Y:   3.686" />
            </ShaftLegend>
          </ShaftBody>
        </Panel>
      </Workspace>

      <StatusBar>
        <span>ﾚﾃﾞｨ</span>
        <Filler />
        <StatusCell />
        <StatusCell />
      </StatusBar>
    </Window>
  );
}
